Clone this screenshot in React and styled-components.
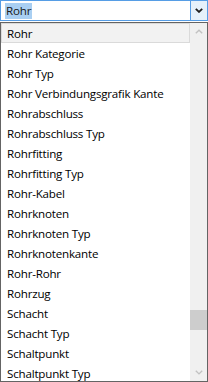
import React from 'react';
import styled, { createGlobalStyle } from 'styled-components';

const items = [
  'Rohr',
  'Rohr Kategorie',
  'Rohr Typ',
  'Rohr Verbindungsgrafik Kante',
  'Rohrabschluss',
  'Rohrabschluss Typ',
  'Rohrfitting',
  'Rohrfitting Typ',
  'Rohr-Kabel',
  'Rohrknoten',
  'Rohrknoten Typ',
  'Rohrknotenkante',
  'Rohr-Rohr',
  'Rohrzug',
  'Schacht',
  'Schacht Typ',
  'Schaltpunkt',
  'Schaltpunkt Typ',
];

function Chevron({ up, color, weight = 1.4 }) {
  return (
    <svg width="8" height="5" viewBox="0 0 8 5">
      <path
        d={up ? 'M0.8 4.3 L4 1.2 L7.2 4.3' : 'M0.8 0.8 L4 3.9 L7.2 0.8'}
        fill="none"
        stroke={color}
        strokeWidth={weight}
      />
    </svg>
  );
}

export default function App() {
  return (
    <>
      <GlobalStyle />
      <Wrapper>
        {/* Eingabefeld mit Dropdown-Knopf */}
        <Field>
          <InputArea>
            <Selection>Rohr</Selection>
          </InputArea>
          <DropButton>
            <Chevron color="#1e1e1e" weight={1.8} />
          </DropButton>
        </Field>

        {/* Aufgeklappte Liste */}
        <List>
          <Items>
            {items.map((name, i) => (
              <Item key={name} $active={i === 0}>
                {name}
              </Item>
            ))}
          </Items>
          <ScrollBar>
            <Arrow>
              <Chevron up color="#c2c2c2" />
            </Arrow>
            <Track>
              <Thumb $offset={270} />
            </Track>
            <Arrow>
              <Chevron color="#c2c2c2" />
            </Arrow>
          </ScrollBar>
        </List>
      </Wrapper>
    </>
  );
}

const GlobalStyle = createGlobalStyle`
  html, body {
    margin: 0;
    padding: 0;
    background: #ffffff;
  }
  body {
    font-family: 'Open Sans', 'Noto Sans', 'Liberation Sans', sans-serif;
    font-size: 11.6px;
    letter-spacing: -0.2px;
    color: #000000;
  }
`;

const Wrapper = styled.div`
  width: 208px;
  height: 382px;
  display: flex;
  flex-direction: column;
  overflow: hidden;
`;

const Field = styled.div`
  height: 21px;
  box-sizing: border-box;
  border: 1px solid #569de5;
  display: flex;
  background: #ffffff;
`;

const InputArea = styled.div`
  flex: 1;
  display: flex;
  align-items: center;
  padding-left: 4px;
`;

const Selection = styled.span`
  background: #a9cff2;
  color: #1a1a1a;
  line-height: 16px;
  padding: 0 1px;
  margin-top: 1px;
`;

const DropButton = styled.div`
  width: 16px;
  background: #e5f1fb;
  border-left: 1px solid #569de5;
  display: flex;
  align-items: center;
  justify-content: center;
`;

const List = styled.div`
  margin-top: 1px;
  height: 360px;
  box-sizing: border-box;
  border: 1px solid #646464;
  display: flex;
  background: #ffffff;
`;

const Items = styled.div`
  flex: 1;
  overflow: hidden;
  display: flex;
  flex-direction: column;
`;

const Item = styled.div`
  flex: 0 0 auto;
  height: 20px;
  box-sizing: border-box;
  padding-left: 5px;
  display: flex;
  align-items: center;
  white-space: nowrap;
  border: 1px solid ${(p) => (p.$active ? '#dadada' : 'transparent')};
  background: ${(p) => (p.$active ? '#f2f2f2' : 'transparent')};
`;

const ScrollBar = styled.div`
  width: 17px;
  background: #f0f0f0;
  display: flex;
  flex-direction: column;
`;

const Arrow = styled.div`
  height: 17px;
  display: flex;
  align-items: center;
  justify-content: center;
`;

const Track = styled.div`
  flex: 1;
  display: flex;
  flex-direction: column;
`;

const Thumb = styled.div`
  height: 20px;
  margin-top: ${(p) => p.$offset}px;
  background: #cdcdcd;
`;
